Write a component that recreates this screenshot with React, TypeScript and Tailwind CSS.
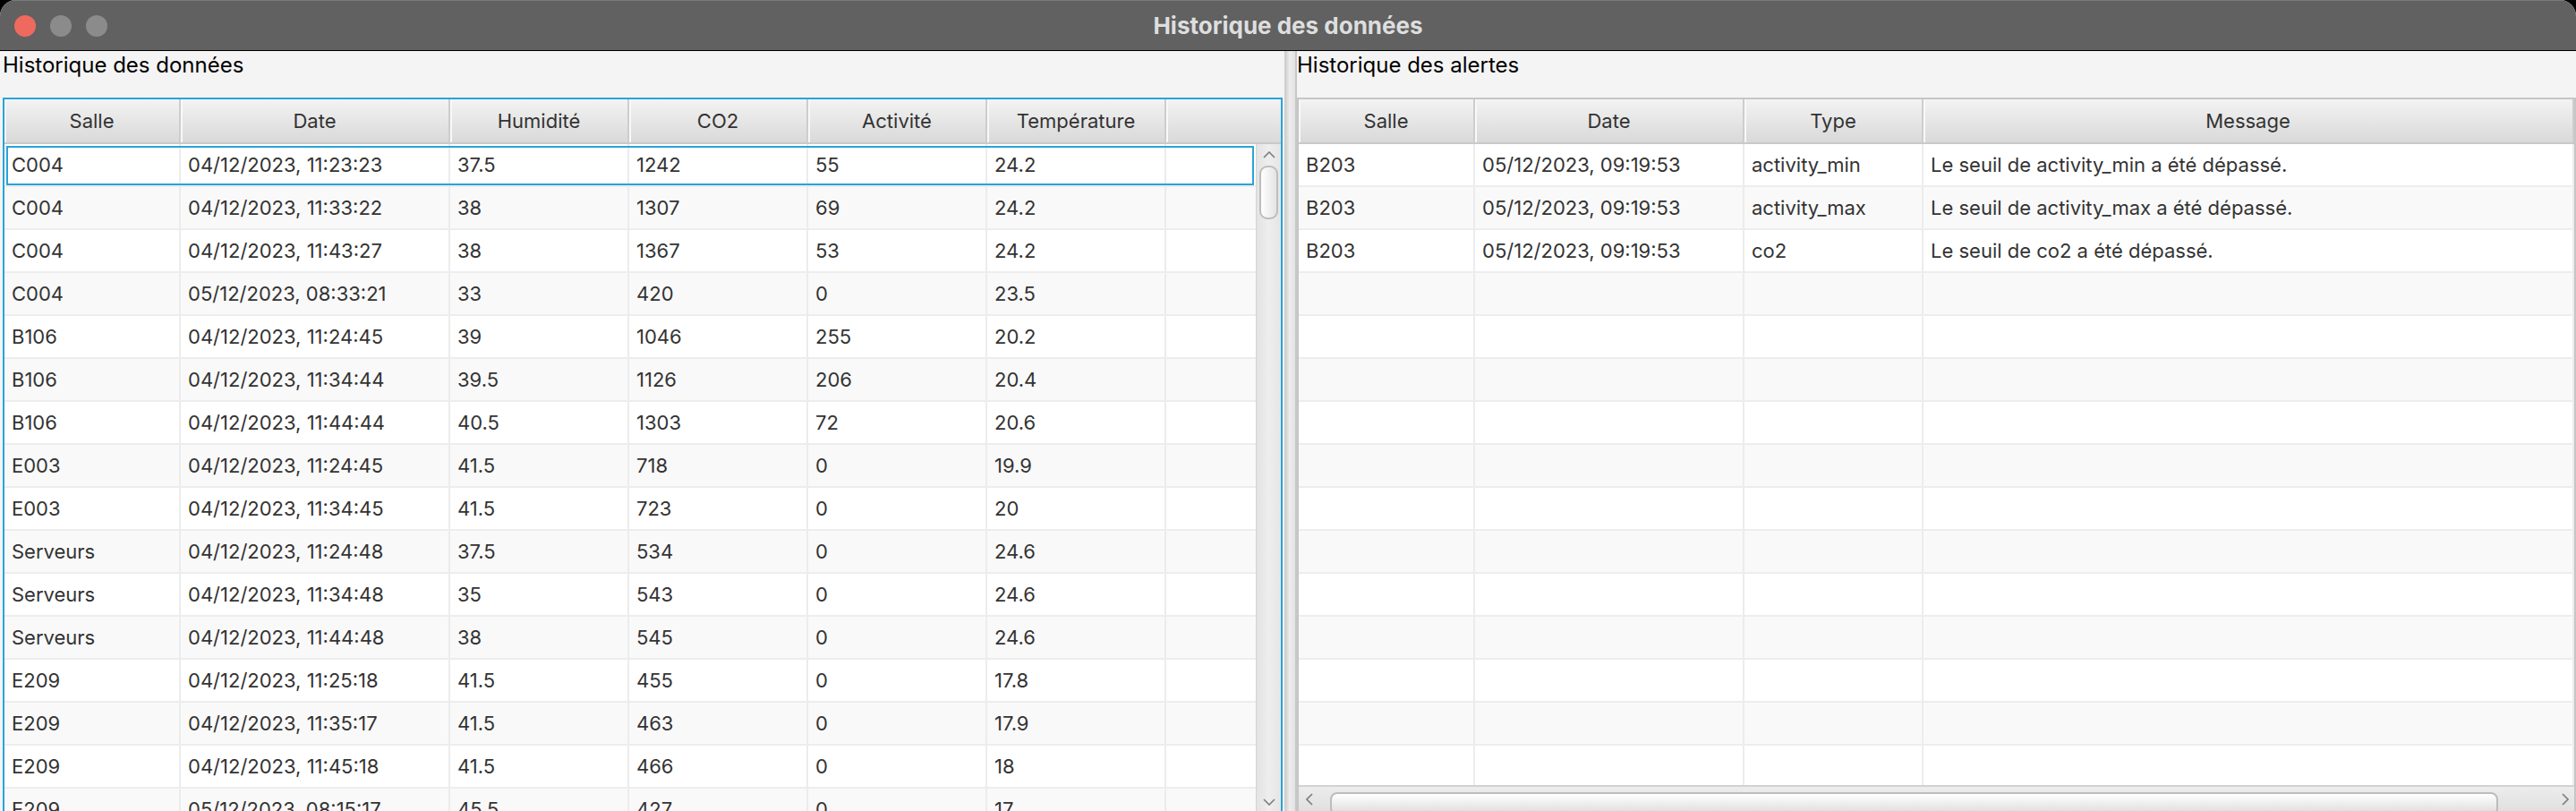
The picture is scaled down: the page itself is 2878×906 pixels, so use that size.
import React from "react";

type Col = { label: string; w: string };

const dataCols: Col[] = [
  { label: "Salle", w: "w-[197px]" },
  { label: "Date", w: "w-[301px]" },
  { label: "Humidité", w: "w-[200px]" },
  { label: "CO2", w: "w-[200px]" },
  { label: "Activité", w: "w-[200px]" },
  { label: "Température", w: "w-[200px]" },
];

const alertCols: Col[] = [
  { label: "Salle", w: "w-[197px]" },
  { label: "Date", w: "w-[301px]" },
  { label: "Type", w: "w-[200px]" },
  { label: "Message", w: "flex-1" },
];

const mesures: string[][] = [
  ["C004", "04/12/2023, 11:23:23", "37.5", "1242", "55", "24.2"],
  ["C004", "04/12/2023, 11:33:22", "38", "1307", "69", "24.2"],
  ["C004", "04/12/2023, 11:43:27", "38", "1367", "53", "24.2"],
  ["C004", "05/12/2023, 08:33:21", "33", "420", "0", "23.5"],
  ["B106", "04/12/2023, 11:24:45", "39", "1046", "255", "20.2"],
  ["B106", "04/12/2023, 11:34:44", "39.5", "1126", "206", "20.4"],
  ["B106", "04/12/2023, 11:44:44", "40.5", "1303", "72", "20.6"],
  ["E003", "04/12/2023, 11:24:45", "41.5", "718", "0", "19.9"],
  ["E003", "04/12/2023, 11:34:45", "41.5", "723", "0", "20"],
  ["Serveurs", "04/12/2023, 11:24:48", "37.5", "534", "0", "24.6"],
  ["Serveurs", "04/12/2023, 11:34:48", "35", "543", "0", "24.6"],
  ["Serveurs", "04/12/2023, 11:44:48", "38", "545", "0", "24.6"],
  ["E209", "04/12/2023, 11:25:18", "41.5", "455", "0", "17.8"],
  ["E209", "04/12/2023, 11:35:17", "41.5", "463", "0", "17.9"],
  ["E209", "04/12/2023, 11:45:18", "41.5", "466", "0", "18"],
  ["E209", "05/12/2023, 08:15:17", "45.5", "427", "0", "17"],
];

const alertes: string[][] = [
  ["B203", "05/12/2023, 09:19:53", "activity_min", "Le seuil de activity_min a été dépassé."],
  ["B203", "05/12/2023, 09:19:53", "activity_max", "Le seuil de activity_max a été dépassé."],
  ["B203", "05/12/2023, 09:19:53", "co2", "Le seuil de co2 a été dépassé."],
];

const Chevron = ({ dir }: { dir: "up" | "down" | "left" | "right" }) => {
  const pts = {
    up: "1,7 7,1 13,7",
    down: "1,1 7,7 13,1",
    left: "7,1 1,7 7,13",
    right: "1,1 7,7 1,13",
  }[dir];
  const vertical = dir === "up" || dir === "down";
  return (
    <svg
      width={vertical ? 14 : 8}
      height={vertical ? 8 : 14}
      viewBox={vertical ? "0 0 14 8" : "0 0 8 14"}
      className="shrink-0"
    >
      <polyline points={pts} fill="none" stroke="#7c7c7c" strokeWidth="1.6" />
    </svg>
  );
};

const HeaderRow = ({ cols, filler }: { cols: Col[]; filler?: boolean }) => (
  <div className="flex h-[50px] shrink-0 border-b-2 border-[#c9c9c9] bg-linear-to-b from-[#f3f3f3] to-[#d9d9d9]">
    {cols.map((c) => (
      <div
        key={c.label}
        className={`${c.w} flex items-center justify-center border-r-2 border-[#cdcdcd] text-[22px] text-[#333] shadow-[inset_2px_0_0_#f8f8f8]`}
      >
        {c.label}
      </div>
    ))}
    {filler && <div className="flex-1 shadow-[inset_2px_0_0_#f8f8f8]" />}
  </div>
);

const Row = ({
  cols,
  cells,
  index,
  filler,
  focused,
}: {
  cols: Col[];
  cells: string[];
  index: number;
  filler?: boolean;
  focused?: boolean;
}) => (
  <div
    className={`flex h-[48px] shrink-0 border-b-2 border-[#ededed] ${
      index % 2 === 1 ? "bg-[#f9f9f9]" : "bg-white"
    } ${focused ? "outline-2 outline-[#2aa3d7] -outline-offset-4" : ""}`}
  >
    {cols.map((c, i) => (
      <div
        key={c.label}
        className={`${c.w} flex items-center border-r-2 border-[#ececec] px-[8px] text-[22px] text-[#333] whitespace-nowrap`}
      >
        {cells[i] ?? ""}
      </div>
    ))}
    {filler && <div className="flex-1" />}
  </div>
);

const TitleBar = () => (
  <div className="grid h-[57px] shrink-0 grid-cols-[1fr_auto_1fr] items-center border-t border-[#7a7a7a] border-b border-b-black bg-[#616161]">
    <div className="flex items-center gap-[16px] pl-[16px]">
      <span className="h-[24px] w-[24px] rounded-full bg-[#ee6a5f]" />
      <span className="h-[24px] w-[24px] rounded-full bg-[#8b8b8b]" />
      <span className="h-[24px] w-[24px] rounded-full bg-[#8b8b8b]" />
    </div>
    <div className="text-[26px] font-bold text-[#dedede]">Historique des données</div>
    <div />
  </div>
);

const DataTable = () => (
  <div className="flex min-h-0 flex-1 flex-col overflow-hidden border-2 border-b-0 border-[#2aa3d7]">
    <HeaderRow cols={dataCols} filler />
    <div className="flex min-h-0 flex-1">
      <div className="min-w-0 flex-1 overflow-hidden">
        {mesures.map((r, i) => (
          <Row key={i} cols={dataCols} cells={r} index={i} filler focused={i === 0} />
        ))}
      </div>
      <div className="flex w-[28px] shrink-0 flex-col items-center border-l border-[#d4d4d4] bg-linear-to-r from-[#e3e3e3] via-[#eeeeee] to-[#e5e5e5]">
        <div className="mt-[8px]">
          <Chevron dir="up" />
        </div>
        <div className="mt-[8px] h-[60px] w-[21px] rounded-[9px] border-2 border-[#bdbdbd] bg-linear-to-r from-white to-[#e4e4e4]" />
        <div className="flex-1" />
        <div className="mb-[6px]">
          <Chevron dir="down" />
        </div>
      </div>
    </div>
  </div>
);

const AlertTable = () => {
  const rows = Array.from({ length: 15 }, (_, i) => alertes[i] ?? []);
  return (
    <div className="flex min-h-0 flex-1 flex-col overflow-hidden border-2 border-b-0 border-[#c6c6c6]">
      <HeaderRow cols={alertCols} />
      <div className="min-h-0 flex-1 overflow-hidden">
        {rows.map((r, i) => (
          <Row key={i} cols={alertCols} cells={r} index={i} />
        ))}
      </div>
      <div className="flex h-[29px] shrink-0 items-center border-t-2 border-[#d2d2d2] bg-linear-to-b from-[#ececec] to-[#e0e0e0] pl-[8px] pr-[6px]">
        <Chevron dir="left" />
        <div className="ml-[19px] mt-[6px] h-[26px] w-[1305px] self-start rounded-[8px] border-2 border-[#bcbcbc] bg-linear-to-b from-white to-[#dcdcdc]" />
        <div className="flex-1" />
        <Chevron dir="right" />
      </div>
    </div>
  );
};

export default function App() {
  return (
    <div className="h-[906px] w-[2878px] overflow-hidden bg-black font-['Inter',sans-serif]">
      <div className="flex h-full flex-col overflow-hidden rounded-t-[18px] bg-[#f4f4f4]">
        <TitleBar />
        <div className="flex min-h-0 flex-1">
          <div className="flex w-[1433px] shrink-0 flex-col pl-[3px]">
            <div className="h-[52px] shrink-0 text-[24px] leading-[32px] text-black">Historique des données</div>
            <DataTable />
          </div>
          <div className="w-[16px] shrink-0 border-l-2 border-r-2 border-l-[#f4f4f4] border-r-[#c8c8c8] bg-linear-to-r from-[#c9c9c9] via-[#ededed] to-[#e2e2e2]" />
          <div className="flex min-w-0 flex-1 flex-col">
            <div className="h-[52px] shrink-0 text-[24px] leading-[32px] text-black">Historique des alertes</div>
            <AlertTable />
          </div>
        </div>
      </div>
    </div>
  );
}
